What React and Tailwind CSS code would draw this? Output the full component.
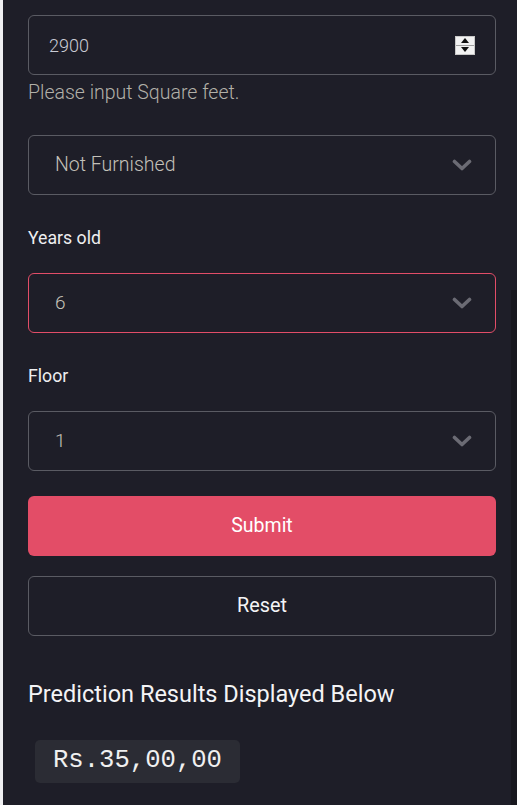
import React from "react";

const Chevron = () => (
  <svg width="20" height="14" viewBox="0 0 20 14" className="shrink-0">
    <path d="M2.5 3.5 L10 10.5 L17.5 3.5" fill="none" stroke="#6b6b74" strokeWidth="3.6" strokeLinecap="round" strokeLinejoin="round" />
  </svg>
);

const Select = ({ value, red }) => (
  <div
    className={`flex h-[60px] items-center justify-between rounded-[6px] border pl-[26px] pr-[23px] ${
      red ? "border-[#e24d68]" : "border-[#5a5b63]"
    }`}
  >
    <span className={`${value.length > 2 ? "text-[19.5px]" : "text-[19px]"} font-light text-[#c4c1b9]`}>{value}</span>
    <Chevron />
  </div>
);

export default function App() {
  return (
    <div
      className="flex h-[805px] w-[517px] overflow-hidden bg-[#1e1e28]"
      style={{ fontFamily: "Roboto, 'Noto Sans', sans-serif" }}
    >
      <div className="w-[3px] shrink-0 bg-[#f0f0f2]" />
      <div className="flex min-w-0 flex-1 flex-col pl-[25px] pr-[15px] pt-[15px]">
        <div className="flex h-[60px] items-center justify-between rounded-[6px] border border-[#5a5b63] pl-[20px] pr-[20px]">
          <span className="text-[18px] font-light text-[#c9cbd4]">2900</span>
          <div className="flex h-[19px] w-[20px] flex-col border border-[#c8c8c8] bg-[#f2f2f2]">
            <div className="flex flex-1 items-center justify-center border-b border-[#a0a0a0]">
              <svg width="8" height="5" viewBox="0 0 8 5"><path d="M0 5 L4 0 L8 5Z" fill="#111" /></svg>
            </div>
            <div className="flex flex-1 items-center justify-center">
              <svg width="8" height="5" viewBox="0 0 8 5"><path d="M0 0 L8 0 L4 5Z" fill="#111" /></svg>
            </div>
          </div>
        </div>
        <div className="h-[60px] pt-[6px]">
          <div className="text-[19.5px] font-light leading-[24px] text-[#b2b0a8]">Please input Square feet.</div>
        </div>

        <Select value="Not Furnished" />

        <div className="h-[78px] pt-[31px]">
          <div className="text-[17.7px] leading-[24px] text-[#eeeef0]">Years old</div>
        </div>
        <Select value="6" red />

        <div className="h-[78px] pt-[31px]">
          <div className="text-[17.7px] leading-[24px] text-[#eeeef0]">Floor</div>
        </div>
        <Select value="1" />

        <button className="mt-[25px] flex h-[60px] items-center justify-center rounded-[6px] bg-[#e34d67] text-[19.5px] font-normal text-white">
          Submit
        </button>
        <button className="mt-[20px] flex h-[60px] items-center justify-center rounded-[6px] border border-[#5a5b63] text-[19.8px] font-normal text-[#f4f4f6]">
          Reset
        </button>

        <div className="mt-[43px] text-[23.5px] font-normal leading-[30px] text-[#f4f4f6]">
          Prediction Results Displayed Below
        </div>

        <div className="ml-[7px] mt-[31px] flex h-[43px] w-[205px] items-center justify-center rounded-[5px] bg-[#2b2c34]">
          <span
            className="text-[25.6px] text-[#f0f0f0]"
            style={{ fontFamily: "'Liberation Mono', 'Courier New', monospace" }}
          >
            Rs.35,00,00
          </span>
        </div>
      </div>
      <div className="flex w-[6px] shrink-0 flex-col">
        <div className="h-[290px]" />
        <div className="flex-1 bg-[#18181f]" />
      </div>
    </div>
  );
}
